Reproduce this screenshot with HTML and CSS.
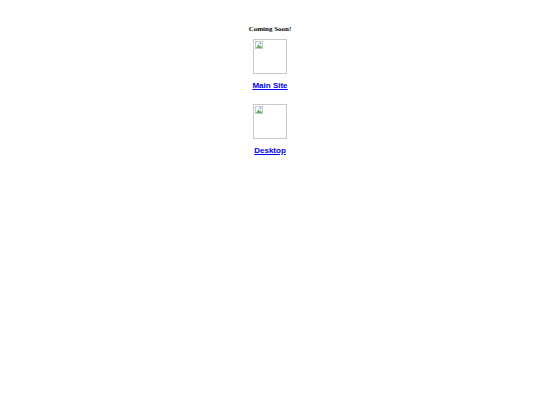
FILE: index.html
```html
<!DOCTYPE html>
<html>
<head>
<meta charset="utf-8">
<link rel="stylesheet" href="styles.css">
</head>
<body>
<div class="page">
  <h1 class="title">Coming Soon!</h1>
  <div class="item">
    <span class="broken"><svg class="bicon" width="8" height="8" viewBox="0 0 8 8"><rect x="0.5" y="0.5" width="7" height="7" fill="#f4f4f4" stroke="#c8c8c8"/><path d="M1 7 L3.5 3.5 L5 5.5 L6 4.5 L7 7 Z" fill="#6aaa6a"/><circle cx="5.5" cy="2.2" r="1" fill="#8ab0dd"/></svg></span>
    <a class="link" href="#">Main Site</a>
  </div>
  <div class="item">
    <span class="broken"><svg class="bicon" width="8" height="8" viewBox="0 0 8 8"><rect x="0.5" y="0.5" width="7" height="7" fill="#f4f4f4" stroke="#c8c8c8"/><path d="M1 7 L3.5 3.5 L5 5.5 L6 4.5 L7 7 Z" fill="#6aaa6a"/><circle cx="5.5" cy="2.2" r="1" fill="#8ab0dd"/></svg></span>
    <a class="link" href="#">Desktop</a>
  </div>
</div>
</body>
</html>
```
FILE: styles.css
```css
html, body { margin: 0; padding: 0; background: #fff; }
.page {
  display: flex;
  flex-direction: column;
  align-items: center;
  padding-top: 25px;
}
.title {
  margin: 0;
  font-family: "Liberation Serif", "Times New Roman", serif;
  font-weight: bold;
  font-size: 7px;
  line-height: 8px;
  color: #000;
}
.item {
  display: flex;
  flex-direction: column;
  align-items: center;
}
.item + .item { margin-top: 8px; }
.broken {
  display: block;
  box-sizing: border-box;
  width: 34px;
  height: 35px;
  border: 1px solid #c8c8c8;
  margin-top: 6px;
  position: relative;
}
.bicon { position: absolute; left: 1px; top: 1px; }
.link {
  margin-top: 7px;
  font-family: "Liberation Sans", Arial, sans-serif;
  font-weight: bold;
  font-size: 8px;
  line-height: 9px;
  color: #0000ee;
  text-decoration: underline;
}
```
